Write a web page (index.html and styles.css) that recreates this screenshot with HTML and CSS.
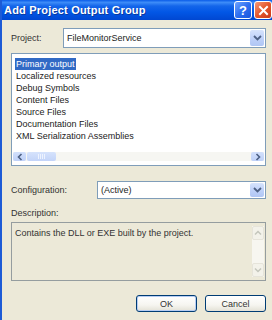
FILE: index.html
```html
<!DOCTYPE html>
<html lang="en">
<head>
    <meta charset="UTF-8">
    <title>Add Project Output Group</title>
    <link rel="stylesheet" href="styles.css">
</head>
<body>
    <div class="window">
        <!-- title bar -->
        <div class="titlebar">
            <span class="title">Add Project Output Group</span>
            <div class="caption-buttons">
                <span class="cap-btn help">?</span>
                <span class="cap-btn close">
                    <svg width="11" height="11" viewBox="0 0 11 11"><path d="M2 2 L9 9 M9 2 L2 9" stroke="#fff" stroke-width="2" stroke-linecap="square"/></svg>
                </span>
            </div>
        </div>

        <div class="content">
            <div class="field-row project-row">
                <span class="label">Project:</span>
                <div class="combo project-combo">
                    <span class="combo-text">FileMonitorService</span>
                    <span class="drop-btn">
                        <svg width="9" height="6" viewBox="0 0 9 6"><path d="M1 1 L4.5 4.5 L8 1" fill="none" stroke="#4d6185" stroke-width="1.8"/></svg>
                    </span>
                </div>
            </div>

            <div class="listbox">
                <ul class="items">
                    <li><span class="selected">Primary output</span></li>
                    <li><span>Localized resources</span></li>
                    <li><span>Debug Symbols</span></li>
                    <li><span>Content Files</span></li>
                    <li><span>Source Files</span></li>
                    <li><span>Documentation Files</span></li>
                    <li><span>XML Serialization Assemblies</span></li>
                </ul>
                <div class="hscroll">
                    <span class="sb-btn">
                        <svg width="6" height="8" viewBox="0 0 6 8"><path d="M4.5 1 L1.5 4 L4.5 7" fill="none" stroke="#4d6185" stroke-width="1.6"/></svg>
                    </span>
                    <span class="sb-thumb"><span class="grip"></span></span>
                    <span class="sb-track"></span>
                    <span class="sb-btn">
                        <svg width="6" height="8" viewBox="0 0 6 8"><path d="M1.5 1 L4.5 4 L1.5 7" fill="none" stroke="#4d6185" stroke-width="1.6"/></svg>
                    </span>
                </div>
            </div>

            <div class="field-row config-row">
                <span class="label">Configuration:</span>
                <div class="combo config-combo">
                    <span class="combo-text">(Active)</span>
                    <span class="drop-btn">
                        <svg width="9" height="6" viewBox="0 0 9 6"><path d="M1 1 L4.5 4.5 L8 1" fill="none" stroke="#4d6185" stroke-width="1.8"/></svg>
                    </span>
                </div>
            </div>

            <div class="label desc-label">Description:</div>
            <div class="description">
                <span class="desc-text">Contains the DLL or EXE built by the project.</span>
                <div class="vscroll">
                    <span class="vs-btn">
                        <svg width="8" height="6" viewBox="0 0 8 6"><path d="M1 4.5 L4 1.5 L7 4.5" fill="none" stroke="#c4c6bc" stroke-width="1.5"/></svg>
                    </span>
                    <span class="vs-track"></span>
                    <span class="vs-btn">
                        <svg width="8" height="6" viewBox="0 0 8 6"><path d="M1 1.5 L4 4.5 L7 1.5" fill="none" stroke="#c4c6bc" stroke-width="1.5"/></svg>
                    </span>
                </div>
            </div>

            <div class="buttons">
                <button class="btn default">OK</button>
                <button class="btn">Cancel</button>
            </div>
        </div>
    </div>
</body>
</html>
```

FILE: styles.css
```css
body {
    margin: 0;
    padding: 0;
    font-family: 'Liberation Sans', Arial, sans-serif;
    font-size: 9px;
    color: #222;
    background-color: #ece9d8;
}

.window {
    width: 270px;
    height: 320px;
    border-left: 2px solid #1d5bd6;
    background-color: #ece9d8;
    display: flex;
    flex-direction: column;
    overflow: hidden;
}

/* title bar */
.titlebar {
    height: 20px;
    flex-shrink: 0;
    display: flex;
    align-items: center;
    justify-content: space-between;
    padding-left: 2px;
    background: linear-gradient(to bottom, #0a5ce8 0%, #3d8cf8 12%, #1466ea 30%, #0257e6 60%, #0047d2 100%);
}

.title {
    color: #fff;
    font-weight: bold;
    font-size: 11px;
    letter-spacing: 0.2px;
    text-shadow: 1px 1px 0 #0a3aa0;
}

.caption-buttons {
    display: flex;
    gap: 2px;
}

.cap-btn {
    width: 16px;
    height: 16px;
    border: 1px solid #fff;
    border-radius: 3px;
    display: flex;
    align-items: center;
    justify-content: center;
    color: #fff;
    font-weight: bold;
    font-size: 13px;
}

.help {
    background: linear-gradient(135deg, #6fa4ff 0%, #2f6ff0 50%, #1b55dc 100%);
}

.close {
    background: linear-gradient(135deg, #f49a7a 0%, #e4572c 50%, #c8391a 100%);
}

/* dialog content */
.content {
    flex: 1;
    display: flex;
    flex-direction: column;
    padding: 8px 6px 0 9px;
}

.label {
    color: #333;
}

.field-row {
    display: flex;
    align-items: center;
}

.project-row .label {
    width: 52px;
}

.config-row {
    margin-top: 15px;
}

.config-row .label {
    width: 86px;
}

.combo {
    flex: 1;
    height: 18px;
    border: 1px solid #7f9db9;
    background-color: #fff;
    display: flex;
    align-items: center;
    justify-content: space-between;
}

.config-combo {
    height: 16px;
}

.combo-text {
    padding-left: 3px;
    color: #222;
}

.drop-btn {
    width: 14px;
    height: calc(100% - 2px);
    margin-right: 1px;
    border-radius: 2px;
    background: linear-gradient(to bottom, #d6e3fc 0%, #bccff8 60%, #b0c6f4 100%);
    display: flex;
    align-items: center;
    justify-content: center;
}

/* list box */
.listbox {
    margin-top: 5px;
    height: 111px;
    border: 1px solid #7f9db9;
    background-color: #fff;
    display: flex;
    flex-direction: column;
}

.items {
    list-style: none;
    margin: 0;
    padding: 4px 0 0 3px;
    flex: 1;
}

.items li {
    height: 12px;
    line-height: 12px;
}

.items span {
    padding: 0 1px;
    display: inline-block;
}

.items .selected {
    background-color: #316ac5;
    color: #fff;
}

.hscroll {
    height: 9px;
    margin: 0 1px 4px 1px;
    display: flex;
    background-color: #f6f6f2;
}

.sb-btn {
    width: 13px;
    border-radius: 2px;
    background: linear-gradient(to bottom, #d2e0fc 0%, #bfd1f8 100%);
    display: flex;
    align-items: center;
    justify-content: center;
}

.sb-thumb {
    width: 29px;
    margin-left: 1px;
    border-radius: 2px;
    background: linear-gradient(to bottom, #d6e3fc 0%, #c3d4f9 100%);
    display: flex;
    align-items: center;
    justify-content: center;
}

.grip {
    width: 7px;
    height: 5px;
    background: repeating-linear-gradient(to right, #eef3fe 0 1px, transparent 1px 2px);
}

.sb-track {
    flex: 1;
}

/* description */
.desc-label {
    margin-top: 8px;
    height: 12px;
    line-height: 12px;
}

.description {
    margin-top: 3px;
    height: 57px;
    border: 1px solid #959d9f;
    background-color: #ece9d8;
    display: flex;
    justify-content: space-between;
}

.desc-text {
    padding: 5px 0 0 3px;
    color: #333;
}

.vscroll {
    width: 12px;
    margin: 3px 1px 3px 0;
    display: flex;
    flex-direction: column;
    background-color: #f7f6f0;
}

.vs-btn {
    height: 12px;
    border-radius: 2px;
    background-color: #f3f2ea;
    border: 1px solid #e6e4da;
    display: flex;
    align-items: center;
    justify-content: center;
}

.vs-track {
    flex: 1;
}

/* buttons */
.buttons {
    margin-top: 14px;
    display: flex;
    justify-content: flex-end;
    gap: 8px;
}

.btn {
    width: 61px;
    height: 17px;
    padding: 0;
    font-family: 'Liberation Sans', Arial, sans-serif;
    font-size: 9px;
    color: #333;
    border: 1px solid #003c74;
    border-radius: 3px;
    background: linear-gradient(to bottom, #ffffff 0%, #f6f5f0 60%, #e3e1d6 100%);
}

.btn.default {
    box-shadow: inset 0 0 0 1px #b7cdf3;
}
```
